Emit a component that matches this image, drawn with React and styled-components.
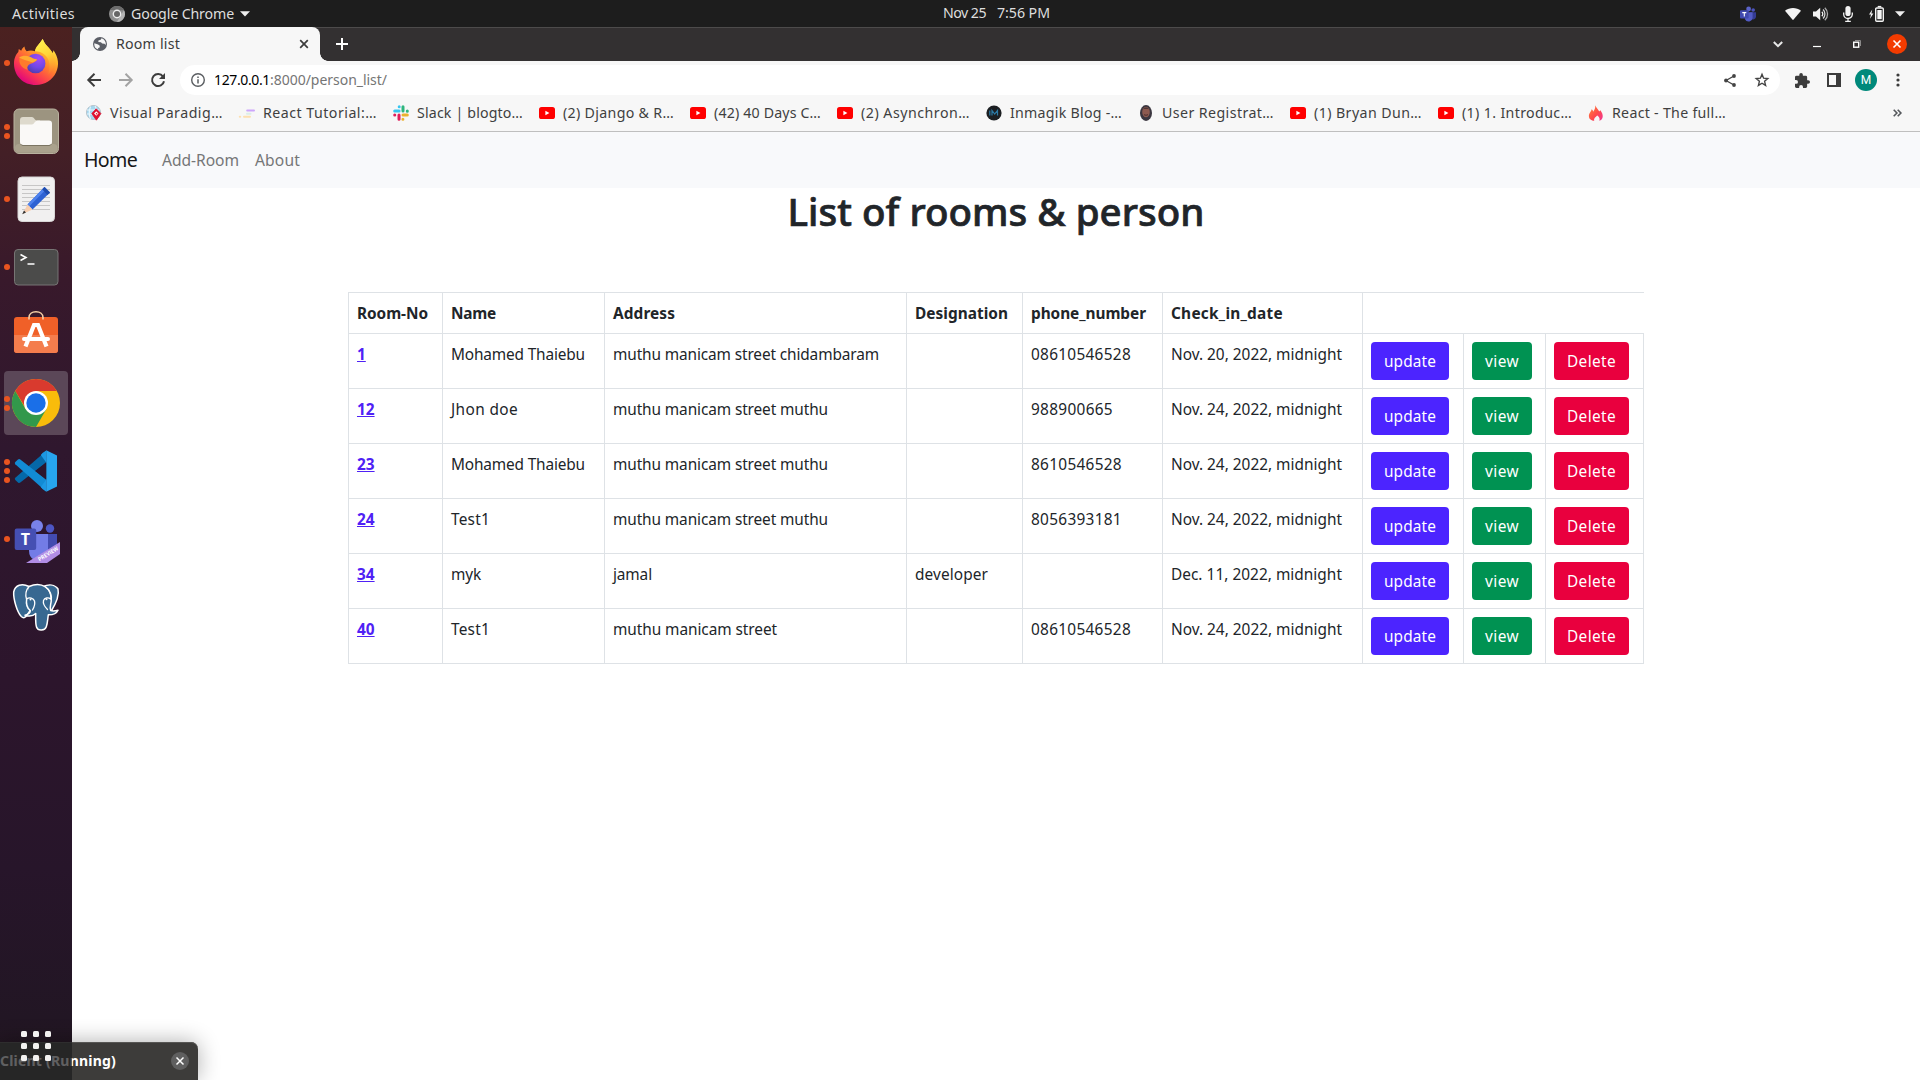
import React, { useLayoutEffect, useRef, useState } from "react";
import styled, { createGlobalStyle, css } from "styled-components";

const GlobalStyle = createGlobalStyle`
  * { box-sizing: border-box; }
  html, body { margin: 0; padding: 0; height: 100%; overflow: hidden; }
  body { font-family: "Noto Sans", "Open Sans", sans-serif; background: #fff; color: #212529; }
  svg { display: block; flex: none; overflow: visible; }
`;

/* ---------- text tracked to a given measure ---------- */

const Tracked = styled.span`
  display: inline-block;
  white-space: pre;
`;

function Fit({ w, children }) {
  const ref = useRef(null);
  const [spacing, setSpacing] = useState(0);
  useLayoutEffect(() => {
    const natural = ref.current.getBoundingClientRect().width;
    setSpacing((w - natural) / String(children).length);
  }, [w, children]);
  return (
    <Tracked ref={ref} style={{ letterSpacing: `${spacing}px` }}>
      {children}
    </Tracked>
  );
}

/* ---------- desktop shell ---------- */

const Desktop = styled.div`
  width: 1920px;
  height: 1080px;
  display: flex;
  flex-direction: column;
  position: relative;
  overflow: hidden;
`;

const TopBar = styled.header`
  height: 27px;
  flex: none;
  display: grid;
  grid-template-columns: 943px 1fr auto;
  align-items: center;
  background: #1d1d1d;
  color: #dedede;
  font-size: 14.2px;
  line-height: 26px;
`;

const TopLeft = styled.div`
  display: flex;
  align-items: center;
  padding-left: 12px;
`;

const AppMenu = styled.div`
  display: flex;
  align-items: center;
  gap: 6px;
  margin-left: 34px;
`;

const Clock = styled.div`
  display: flex;
  gap: 11px;
  position: relative;
  top: -1px;
`;

const Tray = styled.div`
  display: flex;
  align-items: center;
  padding-right: 15px;
`;

const TraySlot = styled.div`
  margin-left: ${(p) => p.$before}px;
`;

const Body = styled.div`
  flex: 1;
  display: flex;
  min-height: 0;
`;

const Dock = styled.nav`
  width: 72px;
  flex: none;
  display: flex;
  flex-direction: column;
  gap: 4px;
  padding: 4px 4px 0;
  background: linear-gradient(180deg, #4b2120 0%, #431f26 12%, #38192b 24%, #2f172e 40%, #2c152c 62%, #27152a 80%, #221624 94%, #21151d 100%);
`;

const DockItem = styled.div`
  height: 64px;
  flex: none;
  display: flex;
  align-items: center;
  gap: 2px;
  border-radius: 4px;
  ${(p) =>
    p.$active &&
    css`
      background: #5b4758;
    `}
`;

const Indicators = styled.div`
  width: 6px;
  display: flex;
  flex-direction: column;
  gap: 3px;
`;

const Dot = styled.i`
  width: 6px;
  height: 6px;
  border-radius: 50%;
  background: #e95420;
`;

const AppGrid = styled.div`
  margin-top: auto;
  margin-bottom: 19px;
  align-self: center;
  display: grid;
  grid-template-columns: repeat(3, 6px);
  gap: 6px;
  position: relative;
  z-index: 3;
`;

const GridCell = styled.i`
  height: 6px;
  border-radius: 1.5px;
  background: #f2f1f0;
`;

const Toast = styled.div`
  position: absolute;
  left: 0;
  bottom: 0;
  z-index: 2;
  width: 198px;
  height: 38px;
  display: flex;
  align-items: center;
  justify-content: space-between;
  padding: 0 9px 0 0;
  border-radius: 0 7px 0 0;
  background: #3d3c3a;
  box-shadow: inset 0 1px 0 #575654, 0 0 22px rgba(0, 0, 0, 0.32);
  color: #fff;
  font-size: 14px;
  font-weight: 700;
  line-height: 38px;
`;

const ToastShade = styled.div`
  position: absolute;
  left: 0;
  top: 0;
  width: 72px;
  height: 38px;
  background: rgba(29, 29, 30, 0.7);
`;

const ToastClose = styled.div`
  width: 18px;
  height: 18px;
  border-radius: 50%;
  display: grid;
  place-items: center;
  background: #5f5f5f;
`;

/* ---------- browser chrome ---------- */

const Browser = styled.div`
  flex: 1;
  display: flex;
  flex-direction: column;
  min-width: 0;
`;

const TabStrip = styled.div`
  height: 34px;
  flex: none;
  display: flex;
  align-items: stretch;
  padding-left: 8px;
  background: #333031;
  box-shadow: inset 0 1px 0 #4d4b4b;
`;

const Tab = styled.div`
  width: 240px;
  display: flex;
  align-items: center;
  padding: 0 11px 0 13px;
  position: relative;
  background: #f7f7f7;
  border-radius: 8px 8px 0 0;
  color: #3c3c3c;
  font-size: 14.2px;
  line-height: 34px;

  &::before,
  &::after {
    content: "";
    position: absolute;
    bottom: 0;
    width: 8px;
    height: 8px;
  }
  &::before {
    left: -8px;
    background: radial-gradient(circle at 0 0, transparent 7.5px, #f7f7f7 8px);
  }
  &::after {
    right: -8px;
    background: radial-gradient(circle at 100% 0, transparent 7.5px, #f7f7f7 8px);
  }
`;

const TabTitle = styled.span`
  flex: 1;
  padding-left: 9px;
`;

const NewTab = styled.div`
  display: flex;
  align-items: center;
  padding-left: 16px;
`;

const WindowButtons = styled.div`
  margin-left: auto;
  display: grid;
  grid-template-columns: 39px 40px 40px 43px;
  justify-items: center;
  align-items: center;
`;

const CloseButton = styled.div`
  width: 20px;
  height: 20px;
  border-radius: 50%;
  display: grid;
  place-items: center;
  background: #f33b00;
  margin-right: 3px;
`;

const Toolbar = styled.div`
  height: 38px;
  flex: none;
  display: flex;
  align-items: center;
  padding: 0 6px 0 6px;
  background: #f7f7f7;
`;

const ToolButton = styled.div`
  width: 32px;
  height: 30px;
  display: grid;
  place-items: center;
`;

const NavGroup = styled.div`
  display: flex;
  width: 102px;
`;

const AddressBar = styled.div`
  width: 1600px;
  height: 30px;
  border-radius: 15px;
  background: #fff;
  display: flex;
  align-items: center;
  padding: 0 2px 0 11px;
  font-size: 14px;
  line-height: 30px;
  color: #757575;
`;

const Url = styled.div`
  flex: 1;
  padding-left: 9px;
`;

const Host = styled.span`
  color: #000;
`;

const ToolGroup = styled.div`
  display: flex;
  padding-left: 6px;
`;

const Avatar = styled.div`
  width: 22px;
  height: 22px;
  border-radius: 50%;
  display: grid;
  place-items: center;
  background: #00897b;
  color: #fff;
  font-family: Roboto, "Noto Sans", sans-serif;
  font-size: 12px;
  line-height: 22px;
`;

const Bookmarks = styled.div`
  height: 33px;
  flex: none;
  display: flex;
  align-items: flex-start;
  padding: 3px 18px 0 14px;
  background: #f7f7f7;
  border-bottom: 1px solid #bfbfbf;
  color: #3f3f3f;
  font-size: 14.2px;
  line-height: 22px;
`;

const Bookmark = styled.div`
  width: ${(p) => p.$w}px;
  flex: none;
  display: flex;
  align-items: center;
  gap: 8px;
`;

const Overflow = styled.div`
  margin-left: auto;
  padding-top: 7px;
`;

/* ---------- page ---------- */

const Page = styled.main`
  flex: 1;
  display: flex;
  flex-direction: column;
  align-items: center;
  background: #fff;
`;

const Navbar = styled.nav`
  width: 100%;
  height: 56px;
  flex: none;
  display: flex;
  align-items: center;
  padding: 0 12px;
  background: #f8f9fb;
`;

const Brand = styled.a`
  font-size: 19.6px;
  line-height: 30px;
  color: #161718;
  width: 70px;
`;

const NavItem = styled.a`
  padding: 0 8px;
  font-size: 15.6px;
  line-height: 24px;
  color: #757677;
`;

const Heading = styled.h1`
  margin: 0 0 57px;
  font-size: 38.5px;
  font-weight: 500;
  line-height: 47px;
  color: #212529;
  -webkit-text-stroke: 0.7px #212529;
`;

const Table = styled.table`
  width: 1296px;
  table-layout: fixed;
  border-collapse: separate;
  border-spacing: 0;
  border: solid #dee2e6;
  border-width: 1px 0 0 1px;
  font-size: 15.4px;
  line-height: 24px;
`;

const cell = css`
  text-align: left;
  vertical-align: top;
  white-space: nowrap;
  border: solid #dee2e6;
  border-width: 0 1px 1px 0;
`;

const Th = styled.th`
  ${cell}
  height: 41px;
  padding: 9px 0 0 8px;
  line-height: 23px;
  font-weight: 700;
  ${(p) =>
    p.$open &&
    css`
      border-right: 0;
    `}
`;

const Td = styled.td`
  ${cell}
  height: 55px;
  padding: ${(p) => (p.$action ? 8 : 9)}px 0 0 8px;
`;

const RoomLink = styled.a`
  color: #4f21f5;
  font-weight: 700;
  text-decoration: underline;
  text-underline-offset: 1px;
  text-decoration-thickness: 1px;
`;

const Button = styled.button`
  display: block;
  width: ${(p) => p.$w}px;
  height: 38px;
  padding: 1px 0 0;
  border: 0;
  border-radius: 4px;
  background: ${(p) => p.$tone};
  color: #fff;
  font: inherit;
  line-height: 37px;
  text-align: center;
`;

/* ---------- small icons ---------- */

const Line = ({ w = 14, h = 14, s = 2, c = "#3c3c3c", d, box }) => (
  <svg width={w} height={h} viewBox={box || `0 0 ${w} ${h}`} fill="none" stroke={c} strokeWidth={s}>
    <path d={d} />
  </svg>
);

const Caret = () => (
  <svg width="10" height="6" viewBox="0 0 10 6">
    <path d="M0 .3h10L5 5.6z" fill="#eee" />
  </svg>
);

const ChromeMono = () => (
  <svg width="16" height="16" viewBox="0 0 16 16">
    <circle cx="8" cy="8" r="8" fill="#8f8f8f" />
    <path d="M1.1 4A8 8 0 0 1 15 4.2H8z" fill="#6d6d6d" />
    <path d="M15 4.2A8 8 0 0 1 8 16l3.4-6z" fill="#b4b4b4" />
    <circle cx="8" cy="8" r="4.4" fill="#eee" />
    <circle cx="8" cy="8" r="3" fill="#666" />
  </svg>
);

const TeamsSmall = () => (
  <svg width="16" height="16" viewBox="0 0 16 16">
    <circle cx="13.2" cy="4" r="1.8" fill="#4b53bc" />
    <circle cx="8.6" cy="3" r="2.4" fill="#5a63c9" />
    <path d="M10 6.3h6v4.5a3 3 0 0 1-5 2z" fill="#343b93" />
    <path d="M5 6.3h7.6v5.3a4 4 0 0 1-7.6 1.6z" fill="#525bc4" />
    <rect x="0" y="4.2" width="8.6" height="8.4" rx="1" fill="#4049ae" />
    <path d="M2.3 6.6h4M4.3 6.6v4" stroke="#fff" strokeWidth="1.1" />
  </svg>
);

const Wifi = () => (
  <svg width="16" height="12" viewBox="0 0 16 12">
    <path d="M0 2.8C4.5-.8 11.5-.8 16 2.8L8.6 11.6a.8.8 0 0 1-1.2 0z" fill="#f3f3f3" />
  </svg>
);

const Speaker = () => (
  <svg width="16" height="14" viewBox="0 0 16 14">
    <path d="M0 4.4h3L7.2.8v12.4L3 9.6H0z" fill="#f3f3f3" />
    <path d="M8.8 4.7a3.2 3.2 0 0 1 0 4.6" fill="none" stroke="#f3f3f3" strokeWidth="1.3" />
    <path d="M10 2.6a6 6 0 0 1 0 8.8" fill="none" stroke="#d5d5d5" strokeWidth="1.3" />
    <path d="M11.8.7a8.6 8.6 0 0 1 0 12.6" fill="none" stroke="#aaa" strokeWidth="1.3" />
  </svg>
);

const Mic = () => (
  <svg width="10" height="16" viewBox="0 0 10 16">
    <rect x="2.4" y="0" width="5.2" height="10" rx="2.6" fill="#f3f3f3" />
    <path d="M.7 6.5v1.7a4.3 4.3 0 0 0 8.6 0V6.5M5 12.5V15M2.2 15.3h5.6" fill="none" stroke="#f3f3f3" strokeWidth="1.3" />
  </svg>
);

const Battery = () => (
  <svg width="15" height="16" viewBox="0 0 15 16">
    <path d="M3.3 3.6 0 8.6h2L1 12.8l3.4-5.2h-2z" fill="#f3f3f3" />
    <rect x="6.7" y="2" width="7.6" height="13.2" rx="1" fill="none" stroke="#f3f3f3" strokeWidth="1.4" />
    <path d="M8.7.6h3.6" stroke="#f3f3f3" strokeWidth="1.4" />
    <rect x="8.3" y="4" width="4.4" height="9.2" fill="#f3f3f3" />
  </svg>
);

const Globe = () => (
  <svg width="14" height="14" viewBox="0 0 14 14">
    <circle cx="7" cy="7" r="7" fill="#5b5e66" />
    <path d="M8.6 1.3 7.4 3.1 5.6 3.3 5.3 5l2.6.2 1.3 1.4 2.3.2 1.2 1.3A5.8 5.8 0 0 0 8.6 1.3zM1.3 6.3l3.8 1.1 1.7 1.4-.2 1.6-1.5.5.1 1.7A5.8 5.8 0 0 1 1.3 6.3z" fill="#f7f7f7" />
  </svg>
);

const Reload = () => (
  <svg width="14" height="14" viewBox="0 0 14 14">
    <path d="M12 3.6A6 6 0 1 0 13 8.2" fill="none" stroke="#3c3c3c" strokeWidth="2" />
    <path d="M14 0v6H8z" fill="#3c3c3c" />
  </svg>
);

const Info = () => (
  <svg width="14" height="14" viewBox="0 0 14 14">
    <circle cx="7" cy="7" r="6.3" fill="none" stroke="#5a5d61" strokeWidth="1.4" />
    <path d="M7 6.2v4.2M7 3.4v1.5" stroke="#5a5d61" strokeWidth="1.5" />
  </svg>
);

const Share = () => (
  <svg width="12" height="13" viewBox="0 0 12 13">
    <path d="M10 2 2 6.5l8 4.5" fill="none" stroke="#444" strokeWidth="1.3" />
    <circle cx="10" cy="2" r="1.9" fill="#444" />
    <circle cx="2" cy="6.5" r="1.9" fill="#444" />
    <circle cx="10" cy="11" r="1.9" fill="#444" />
  </svg>
);

const Star = () => (
  <svg width="14" height="14" viewBox="0 0 14 14">
    <path d="m7 1.3 1.6 3.9 4.2.4-3.2 2.7 1 4.1L7 10.2l-3.6 2.2 1-4.1L1.2 5.6l4.2-.4z" fill="none" stroke="#444" strokeWidth="1.4" />
  </svg>
);

const Puzzle = () => (
  <svg width="15" height="15" viewBox="2 1 21 21">
    <path
      fill="#3c3c3c"
      d="M20.5 11H19V7a2 2 0 0 0-2-2h-4V3.500a2.500 2.500 0 0 0-5 0V5H4a2 2 0 0 0-2 2v3.800h1.500a2.700 2.700 0 0 1 0 5.400H2V20a2 2 0 0 0 2 2h3.800v-1.500a2.700 2.700 0 0 1 5.400 0V22H17a2 2 0 0 0 2-2v-4h1.500a2.500 2.500 0 0 0 0-5z"
    />
  </svg>
);

const Panel = () => (
  <svg width="14" height="14" viewBox="0 0 14 14">
    <path d="M0 0h14v14H0zM2 2v10h7V2z" fill="#3c3c3c" fillRule="evenodd" />
  </svg>
);

const Kebab = () => (
  <svg width="4" height="14" viewBox="0 0 4 14" fill="#3c3c3c">
    <circle cx="2" cy="2" r="1.6" />
    <circle cx="2" cy="7" r="1.6" />
    <circle cx="2" cy="12" r="1.6" />
  </svg>
);

const Restore = () => (
  <svg width="8" height="8" viewBox="0 0 8 8" fill="none">
    <path d="M2 .5h5.500V6" stroke="#8c8a8a" />
    <rect x=".7" y="2.200" width="5" height="5" stroke="#fff" strokeWidth="1.400" />
  </svg>
);

/* ---------- bookmark favicons ---------- */

const Paradigm = () => (
  <svg width="16" height="16" viewBox="0 0 16 16">
    <circle cx="7.500" cy="7.500" r="7" fill="#a6d8f0" stroke="#a9b4bb" strokeWidth=".8" />
    <path d="M1 5h12.500M1 9h8M4.500 1.500c-1.500 4-1.500 9 0 12.500M9 1c1 1.500 1.500 2.500 1.500 4" fill="none" stroke="#e8f6fd" strokeWidth="1.200" />
    <path d="M10.200 3.800 14.900 8.500 10.400 15.200 5.800 8.500z" fill="#e0102f" stroke="#e0102f" strokeWidth=".8" strokeLinejoin="round" />
    <path d="m10.300 6.300 2.200 2.200-2.200 2.200-2.200-2.200z" fill="#fff" />
    <circle cx="10.600" cy="8.800" r=".8" fill="#e0102f" />
  </svg>
);

const Tutorial = () => (
  <svg width="16" height="16" viewBox="0 0 16 16" strokeLinecap="round" strokeWidth="2">
    <path d="M8.200 5.500h6.800" stroke="#cda6fb" />
    <path d="M8 8.700h3.500" stroke="#dcefe6" />
    <path d="M5 11.800h6M.8 11.800h.4" stroke="#fde0b0" />
  </svg>
);

const Slack = () => (
  <svg width="16" height="16" viewBox="0 0 16 16" strokeWidth="3" strokeLinecap="round">
    <path d="M1.700 6h4.400M6.200 1.700v.1" stroke="#36c5f0" />
    <path d="M10 1.700v4.300M14.300 6.200v-.1" stroke="#2eb67d" />
    <path d="M14.300 10H10M9.900 14.300v-.1" stroke="#ecb22e" />
    <path d="M6 14.300V10M1.700 10h.1" stroke="#e01e5a" />
  </svg>
);

const YouTube = () => (
  <svg width="16" height="16" viewBox="0 0 16 16">
    <rect x="0" y="2" width="16" height="12" rx="2.600" fill="#f00" />
    <path d="M6.400 5.700v4.600l4-2.300z" fill="#fff" />
  </svg>
);

const Inmagik = () => (
  <svg width="16" height="16" viewBox="0 0 16 16">
    <circle cx="8" cy="8" r="7.600" fill="#1c1f22" />
    <path d="M3.800 5.500v5M6 10.500v-5l2.700 3.600 2.800-3.600v5" fill="none" stroke="#2b7aa6" strokeWidth="1.200" />
  </svg>
);

const Portrait = () => (
  <svg width="16" height="16" viewBox="0 0 16 16">
    <ellipse cx="8" cy="8" rx="6" ry="7.900" fill="#3b3740" />
    <ellipse cx="8" cy="7" rx="3.800" ry="5.300" fill="#8d5a50" />
    <path d="M4.500 4.500Q8 .5 11.500 4.500L10 3.700H6z" fill="#382c2e" />
    <path d="M6 9.700q2 1.200 4 0" stroke="#4d2e2c" fill="none" />
  </svg>
);

const Flame = () => (
  <svg width="16" height="16" viewBox="0 0 16 16">
    <defs>
      <linearGradient id="flame" x1="0" y1="0" x2="1" y2="1">
        <stop offset="0" stopColor="#ff8a3d" />
        <stop offset=".55" stopColor="#ff4a4a" />
        <stop offset="1" stopColor="#f0359a" />
      </linearGradient>
    </defs>
    <path d="M7.200.3c1 2.500 3 4 4 6.200l1.200-1.200C14 7.500 15 9.500 14.700 12c-.3 2-1.500 3.300-3.400 3.800.8-2 .2-3.700-2-5.400C7.600 12 5.500 13 6.300 15.800 3.500 15.700 1 14 .9 11.200.8 8 3.200 7.200 3.600 4.300c1 .6 1.400 1.400 1.500 2.500C6.700 5 7.500 3 7.200.3z" fill="url(#flame)" />
  </svg>
);

/* ---------- dock icons (48 × 48) ---------- */

const Icon48 = ({ children }) => (
  <svg width="48" height="48" viewBox="0 0 48 48">
    {children}
  </svg>
);

const Firefox = () => (
  <Icon48>
    <defs>
      <linearGradient id="ffBody" x1=".85" y1=".1" x2=".25" y2=".95">
        <stop offset="0" stopColor="#fff14f" />
        <stop offset=".25" stopColor="#ffb72b" />
        <stop offset=".48" stopColor="#ff7a30" />
        <stop offset=".75" stopColor="#fb3a50" />
        <stop offset="1" stopColor="#e0067c" />
      </linearGradient>
      <radialGradient id="ffCore" cx=".65" cy=".25" r=".9">
        <stop offset="0" stopColor="#a54af5" />
        <stop offset=".5" stopColor="#7148e8" />
        <stop offset="1" stopColor="#443a9c" />
      </radialGradient>
      <linearGradient id="ffTail" x1=".3" y1="0" x2=".6" y2="1">
        <stop offset="0" stopColor="#fff44f" />
        <stop offset=".5" stopColor="#ffd437" />
        <stop offset="1" stopColor="#ff8f30" stopOpacity=".2" />
      </linearGradient>
    </defs>
    <g transform="translate(0 -1)">
      <path d="M30.700 1c2 6 7 8.500 10 14.300l.8-3c5 7 6 15 2.500 22.200C40.500 42 33 47 24 47 11 47 2 37.500 2 25.700 2 20 4 16.500 6.300 14l.5-3 2.400 1.800c.5-2 2-3.600 3.300-4.300.1 2 1 3.600 2.200 4.800 3-1 5.700-.8 8.300 0C23.500 9 27.500 6 30.700 1z" fill="url(#ffBody)" />
      <path d="M30.700 1c2 6 7 8.500 10 14.300 3.300 6.500 2.300 16.500-5 21.700C39 30 38.500 20 31 15.500c-3-1.900-5.500-2.500-8-2.300C23.500 9 27.500 6 30.700 1z" fill="url(#ffTail)" />
      <circle cx="23.600" cy="25.500" r="9.800" fill="url(#ffCore)" />
      <path d="M7.500 20c4-3 9.500-2.500 13 .2 1.600 1 3.700.7 4.500 1.300-.4 2-4.800 3.800-6.500 4.300-2.500 1-3.700 3-3 6C9.500 30 6.500 25.500 7.500 20z" fill="#ff7a2c" />
      <path d="M7 19.500c4.500-3 10-2 13.500.7 1.600 1 3.700.7 4.500 1.300-.4 1.300-3 2.500-4.500 3C16 22.500 11 22 7 19.500z" fill="#ffac32" />
    </g>
  </Icon48>
);

const Files = () => (
  <Icon48>
    <rect x="2" y="2" width="44.500" height="44.500" rx="5" fill="#9c9480" stroke="#b9b29f" />
    <rect x="3" y="37" width="42.500" height="8.500" rx="4" fill="#aaa28d" />
    <path d="M8 13a3 3 0 0 1 3-3h9c1.700 0 3 3.500 5 3.500h3V22H8z" fill="#dedacd" />
    <path d="M8 17.500h12c2 0 3-4 5.500-4H37a3 3 0 0 1 3 3V35a3 3 0 0 1-3 3H11a3 3 0 0 1-3-3z" fill="#faf9f7" />
    <path d="M8.500 37q1 1.500 2.500 1.500h26q1.500 0 2.500-1.500" fill="none" stroke="#6f6957" strokeWidth=".8" />
  </Icon48>
);

const Editor = () => (
  <Icon48>
    <rect x="6" y="2" width="36.500" height="44.500" rx="4" fill="#f1f0f0" stroke="#d8d6d6" />
    <path d="M10 10.500h28M10 14.500h28M10 18.500h28M10 22.500h28M10 26.500h28M10 30.500h28M10 34.500h28" stroke="#c7c6c6" />
    <path d="m15.500 29.500 17-17.500 5.500 5.500-17.500 17z" fill="#2e62d3" />
    <path d="m15.500 29.500 17-17.500 2 2-17.200 17.300z" fill="#4e82ed" />
    <path d="m32.500 12 5.500 5.500-2.500 2.500-5.300-5.700z" fill="#1f4caf" />
    <path d="m15.500 29.500 5 5L10.500 39z" fill="#f7ceb0" />
    <path d="m12 35.500 2 2-3.800 1.700z" fill="#333" />
  </Icon48>
);

const Terminal = () => (
  <Icon48>
    <rect x="2.500" y="6.500" width="43.500" height="35.500" rx="3.500" fill="#4b4b4a" stroke="#777574" />
    <path d="m8.500 11.500 5.500 3-5.500 3M15.500 21h7" fill="none" stroke="#fff" strokeWidth="1.600" />
  </Icon48>
);

const Software = () => (
  <Icon48>
    <rect x="2" y="6" width="44" height="36" rx="3" fill="#f06028" />
    <path d="M2 24h44v15a3 3 0 0 1-3 3H5a3 3 0 0 1-3-3z" fill="#f47d4d" />
    <path d="M17 8.500V6.500C17 3 20 .7 24 .7s7 2.300 7 5.800v2" fill="none" stroke="#f5cfa6" strokeWidth="1.600" />
    <path d="M13.500 35.500 22 14h4l8.500 21.500" fill="none" stroke="#fff" strokeWidth="4.200" />
    <path d="M12 28h24" stroke="#fff" strokeWidth="4" strokeLinecap="round" />
  </Icon48>
);

const Chrome = () => (
  <Icon48>
    <circle cx="24" cy="24" r="24" fill="#f9bc0b" />
    <path d="M24 12h20.800A24 24 0 0 0 3.200 12L13 28z" fill="#d93a2e" />
    <path d="M3.200 12A24 24 0 0 0 24 48l10.400-18-10.400 2-10.400-2z" fill="#32984b" />
    <circle cx="24" cy="24" r="12" fill="#fff" />
    <circle cx="24" cy="24" r="9.700" fill="#1a6fe8" />
  </Icon48>
);

const VsCode = () => (
  <Icon48>
    <path d="M3.300 30.700a1.600 1.600 0 0 0 0 2.200l2.700 2.500a1.800 1.800 0 0 0 2.300.1L34 15.500V4z" fill="#0568a8" />
    <path d="M3.300 17.300a1.600 1.600 0 0 1 0-2.200L6 12.600a1.800 1.800 0 0 1 2.300-.1L34 32.500v12z" fill="#128bd4" />
    <path d="M34.200 3.200v41.600L45 39.500V8.500z" fill="#27a5ee" />
    <path d="M34.200 15.500v17L23.500 24z" fill="#2c152d" />
    <path d="m30.500 42 3.700 2.600V3.400L30.500 6l-1.700 2 5.400 7.500v17L28.800 40z" fill="#1c98e3" />
  </Icon48>
);

const PreviewTag = styled.text`
  font: 700 5.6px "Open Sans", sans-serif;
  fill: #fff;
`;

const TeamsT = styled.text`
  font: 700 16px "Open Sans", sans-serif;
  fill: #fff;
`;

const Teams = () => (
  <Icon48>
    <circle cx="38" cy="13.500" r="4.200" fill="#4d56c4" />
    <circle cx="25" cy="11" r="6" fill="#7982ea" />
    <path d="M33 19h12v13l-12 8z" fill="#434bb0" />
    <path d="M17 19h19v17L22 45q-5-3-5-9z" fill="#737ce6" />
    <rect x="2.700" y="13.500" width="21.500" height="21.500" rx="2" fill="#454fb3" />
    <TeamsT x="8.800" y="30">T</TeamsT>
    <path d="M48 27v12L35 48H14z" fill="#b18de5" />
    <PreviewTag transform="translate(27.600 46.400) rotate(-32)" textLength="22.500" lengthAdjust="spacingAndGlyphs">
      PREVIEW
    </PreviewTag>
  </Icon48>
);

const Postgres = () => (
  <Icon48>
    <g fill="#376891" stroke="#fff" strokeWidth="1.500" strokeLinejoin="round" strokeLinecap="round">
      <path d="M31 3.500C37 1 43 1.500 46 6c1.500 6-3 16-7 22.500l-8-1z" />
      <path d="M17 3.500C10 0 3 2 1.700 9c-.4 7 3.300 20 7.600 24.500 2 2 4.300 1.300 5.700-1.300l4-6z" />
      <path d="M17 3.500C23 1 29 1 33.500 4c4 3 6.500 8 5.700 14-.3 3.500-1.800 6-.5 9.500 2 .8 4.300.5 7.300-.3-1.500 3.300-5 4.700-9.700 4.600-.7 4.500-.6 8-2 12-1.300 4-8.300 4.700-9.800.3-1.200-4-.8-9-.8-13.600-2.500 2.500-6 3.300-10.700 1.700 3-.8 5.500-1.700 5.300-4.700C14 24.500 14 20 14.700 15.500" />
      <path d="M14.500 16c3-2 7-1 8 2 1 4-.8 7-2 9M38.500 16c-2-2-6-1.500-7 1.500-.8 3.500 2 7 4 9M14.500 16C13 11 14 7 17 3.500M39 16c0-5-2-10-5.500-12" fill="none" strokeWidth="1.300" />
    </g>
    <circle cx="18.500" cy="16.500" r="1" fill="#fff" />
    <circle cx="34.500" cy="16.300" r="1" fill="#fff" />
  </Icon48>
);

/* ---------- data ---------- */

const dock = [
  [Firefox, 1],
  [Files, 2],
  [Editor, 1],
  [Terminal, 1],
  [Software, 0],
  [Chrome, 2, true],
  [VsCode, 3],
  [Teams, 1],
  [Postgres, 0],
];

const bookmarks = [
  [Paradigm, "Visual Paradig…", 113, 153],
  [Tutorial, "React Tutorial:…", 114, 154],
  [Slack, "Slack | blogto…", 106, 146],
  [YouTube, "(2) Django & R…", 111, 151],
  [YouTube, "(42) 40 Days C…", 107, 147],
  [YouTube, "(2) Asynchron…", 109, 149],
  [Inmagik, "Inmagik Blog -…", 112, 152],
  [Portrait, "User Registrat…", 112, 152],
  [YouTube, "(1) Bryan Dun…", 108, 148],
  [YouTube, "(1) 1. Introduc…", 110, 150],
  [Flame, "React - The full…", 114, 150],
];

const columns = [94, 162, 302, 116, 140, 200, 101, 82, 98];

const headers = [
  ["Room-No", 71],
  ["Name", 45],
  ["Address", 62],
  ["Designation", 93],
  ["phone_number", 115],
  ["Check_in_date", 112],
];

const rows = [
  [["1"], ["Mohamed Thaiebu", 134], ["muthu manicam street chidambaram", 266], null, ["08610546528", 100], ["Nov. 20, 2022, midnight", 171]],
  [["12"], ["Jhon doe", 67], ["muthu manicam street muthu", 215], null, ["988900665", 82], ["Nov. 24, 2022, midnight", 171]],
  [["23"], ["Mohamed Thaiebu", 134], ["muthu manicam street muthu", 215], null, ["8610546528", 91], ["Nov. 24, 2022, midnight", 171]],
  [["24"], ["Test1", 39], ["muthu manicam street muthu", 215], null, ["8056393181", 91], ["Nov. 24, 2022, midnight", 171]],
  [["34"], ["myk", 30], ["jamal", 39], ["developer", 73], null, ["Dec. 11, 2022, midnight", 171]],
  [["40"], ["Test1", 39], ["muthu manicam street", 164], null, ["08610546528", 100], ["Nov. 24, 2022, midnight", 171]],
];

const actions = [
  ["update", 52, 78, "#4c24ff"],
  ["view", 34, 60, "#009252"],
  ["Delete", 49, 75, "#e9003e"],
];

/* ---------- app ---------- */

function RoomTable() {
  return (
    <Table>
      <colgroup>
        {columns.map((w, i) => (
          <col key={i} width={w} />
        ))}
      </colgroup>
      <thead>
        <tr>
          {headers.map(([label, w]) => (
            <Th key={label}>
              <Fit w={w}>{label}</Fit>
            </Th>
          ))}
          <Th colSpan={3} $open />
        </tr>
      </thead>
      <tbody>
        {rows.map((row, r) => (
          <tr key={r}>
            {row.map((entry, c) => (
              <Td key={c}>
                {entry &&
                  (c === 0 ? (
                    <RoomLink>{entry[0]}</RoomLink>
                  ) : (
                    <Fit w={entry[1]}>{entry[0]}</Fit>
                  ))}
              </Td>
            ))}
            {actions.map(([label, textW, w, tone]) => (
              <Td key={label} $action>
                <Button $w={w} $tone={tone}>
                  <Fit w={textW}>{label}</Fit>
                </Button>
              </Td>
            ))}
          </tr>
        ))}
      </tbody>
    </Table>
  );
}

export default function App() {
  return (
    <Desktop>
      <GlobalStyle />
      <TopBar>
        <TopLeft>
          <Fit w={63}>Activities</Fit>
          <AppMenu>
            <ChromeMono />
            <Fit w={103}>Google Chrome</Fit>
            <Caret />
          </AppMenu>
        </TopLeft>
        <Clock>
          <Fit w={43}>Nov 25</Fit>
          <Fit w={53}>7:56 PM</Fit>
        </Clock>
        <Tray>
          <TeamsSmall />
          <TraySlot $before={29}><Wifi /></TraySlot>
          <TraySlot $before={12}><Speaker /></TraySlot>
          <TraySlot $before={14}><Mic /></TraySlot>
          <TraySlot $before={16}><Battery /></TraySlot>
          <TraySlot $before={11}><Caret /></TraySlot>
        </Tray>
      </TopBar>

      <Body>
        <Dock>
          {dock.map(([Icon, windows, active], i) => (
            <DockItem key={i} $active={active}>
              <Indicators>
                {Array.from({ length: windows }, (_, n) => (
                  <Dot key={n} />
                ))}
              </Indicators>
              <Icon />
            </DockItem>
          ))}
          <AppGrid>
            {Array.from({ length: 9 }, (_, n) => (
              <GridCell key={n} />
            ))}
          </AppGrid>
        </Dock>

        <Browser>
          <TabStrip>
            <Tab>
              <Globe />
              <TabTitle>
                <Fit w={64}>Room list</Fit>
              </TabTitle>
              <Line w={10} h={10} s={1.7} d="M1.200 1.200l7.600 7.600M8.800 1.200 1.200 8.800" />
            </Tab>
            <NewTab>
              <Line w={12} h={12} s={2} c="#fff" d="M6 0v12M0 6h12" />
            </NewTab>
            <WindowButtons>
              <Line w={10} h={7} s={2} c="#e8e8e8" d="M.8 1 5 5.200 9.200 1" />
              <Line w={8} h={6} s={1.2} c="#fff" d="M0 5.500h8" />
              <Restore />
              <CloseButton>
                <Line w={8} h={8} s={1.6} c="#fff" d="M.5.5l7 7M7.500.5l-7 7" />
              </CloseButton>
            </WindowButtons>
          </TabStrip>

          <Toolbar>
            <NavGroup>
              <ToolButton><Line d="M14 7H1.500M7.500.8 1.300 7l6.200 6.200" /></ToolButton>
              <ToolButton><Line c="#a3a3a3" d="M0 7h12.500M6.500.8 12.700 7l-6.200 6.200" /></ToolButton>
              <ToolButton><Reload /></ToolButton>
            </NavGroup>
            <AddressBar>
              <Info />
              <Url>
                <Host><Fit w={56}>127.0.0.1</Fit></Host>
                <Fit w={117}>:8000/person_list/</Fit>
              </Url>
              <ToolButton><Share /></ToolButton>
              <ToolButton><Star /></ToolButton>
            </AddressBar>
            <ToolGroup>
              <ToolButton><Puzzle /></ToolButton>
              <ToolButton><Panel /></ToolButton>
              <ToolButton><Avatar>M</Avatar></ToolButton>
              <ToolButton><Kebab /></ToolButton>
            </ToolGroup>
          </Toolbar>

          <Bookmarks>
            {bookmarks.map(([Icon, label, textW, w]) => (
              <Bookmark key={label} $w={w}>
                <Icon />
                <Fit w={textW}>{label}</Fit>
              </Bookmark>
            ))}
            <Overflow>
              <Line w={9} h={8} s={1.6} c="#55585c" d="M.7.800 3.900 4 .7 7.200M4.700.800 7.900 4 4.700 7.200" />
            </Overflow>
          </Bookmarks>

          <Page>
            <Navbar>
              <Brand><Fit w={53}>Home</Fit></Brand>
              <NavItem><Fit w={77}>Add-Room</Fit></NavItem>
              <NavItem><Fit w={45}>About</Fit></NavItem>
            </Navbar>
            <Heading><Fit w={417}>List of rooms &amp; person</Fit></Heading>
            <RoomTable />
          </Page>
        </Browser>
      </Body>

      <Toast>
        <Fit w={116}>Client (Running)</Fit>
        <ToastClose>
          <Line w={8} h={8} s={1.5} c="#fff" d="M.5.5l7 7M7.500.5l-7 7" />
        </ToastClose>
        <ToastShade />
      </Toast>
    </Desktop>
  );
}
